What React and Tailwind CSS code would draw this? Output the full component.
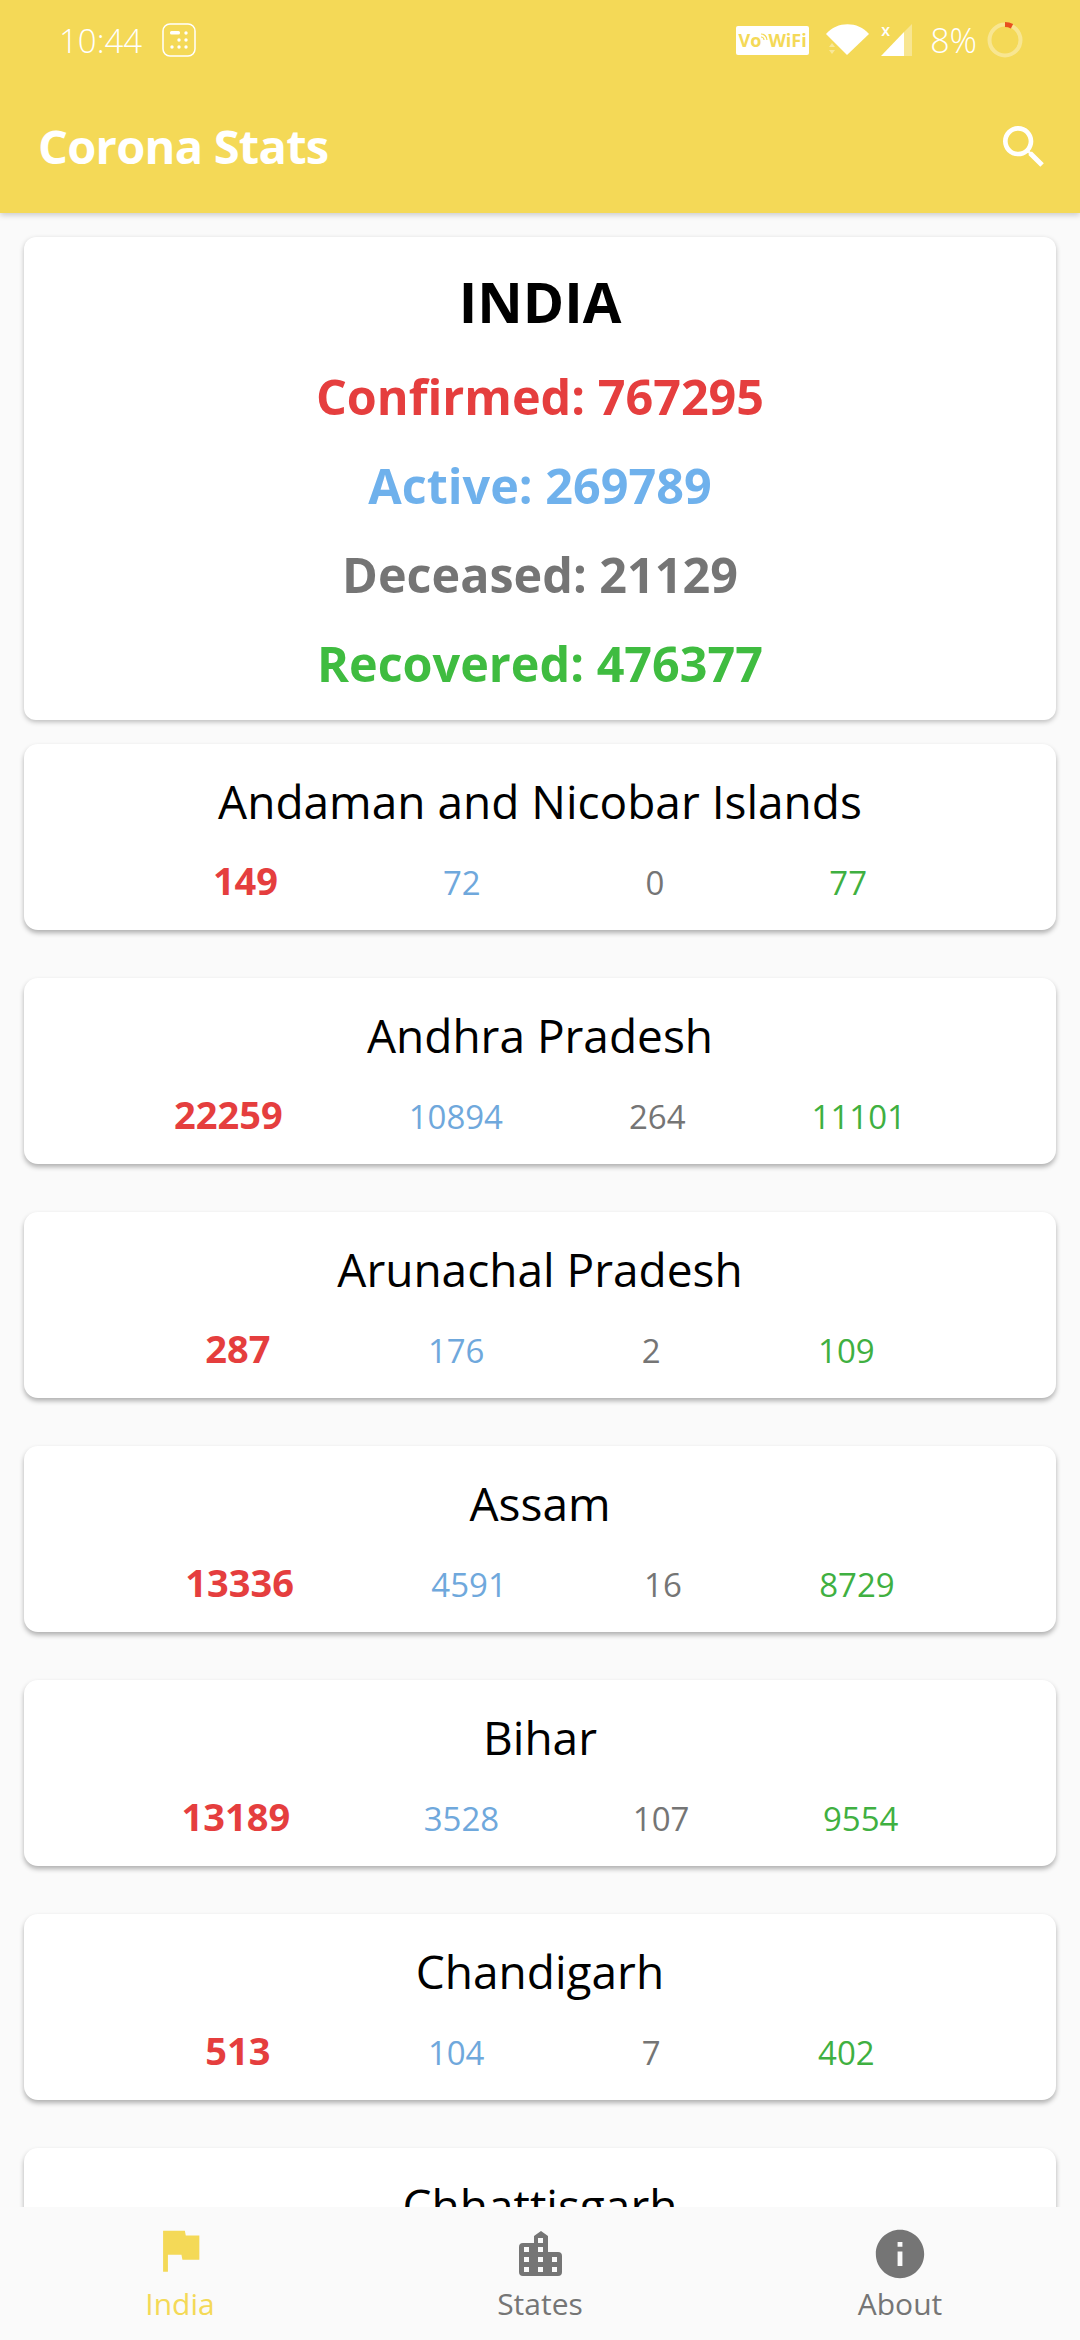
const states = [
  { name: 'Andaman and Nicobar Islands', confirmed: 149, active: 72, deceased: 0, recovered: 77 },
  { name: 'Andhra Pradesh', confirmed: 22259, active: 10894, deceased: 264, recovered: 11101 },
  { name: 'Arunachal Pradesh', confirmed: 287, active: 176, deceased: 2, recovered: 109 },
  { name: 'Assam', confirmed: 13336, active: 4591, deceased: 16, recovered: 8729 },
  { name: 'Bihar', confirmed: 13189, active: 3528, deceased: 107, recovered: 9554 },
  { name: 'Chandigarh', confirmed: 513, active: 104, deceased: 7, recovered: 402 },
  { name: 'Chhattisgarh' },
];

const StatusBar = () => (
  <div className="flex h-[80px] items-center justify-between pl-[59px] pr-[57px] text-white">
    <div className="flex items-center gap-[20px]">
      <span className="text-[33px] font-light leading-none">10:44</span>
      <svg width="34" height="34" viewBox="0 0 34 34" fill="none">
        <rect x="1" y="1" width="32" height="32" rx="7" stroke="white" strokeWidth="1.5" />
        <rect x="8" y="8" width="10" height="3.5" rx="1.5" fill="white" />
        <circle cx="24" cy="10" r="1.7" fill="white" />
        <circle cx="17" cy="17" r="1.7" fill="white" />
        <circle cx="24" cy="17" r="1.7" fill="white" />
        <circle cx="10" cy="24" r="1.7" fill="white" />
        <circle cx="17" cy="24" r="1.7" fill="white" />
        <circle cx="24" cy="24" r="1.7" fill="white" />
      </svg>
    </div>
    <div className="flex items-center">
      <div className="flex h-[29px] w-[73px] items-center justify-center rounded-[2px] bg-white text-[18px] font-bold leading-none text-[#f4d957]">
        <span>Vo</span>
        <svg className="mb-[6px]" width="7" height="8" viewBox="0 0 7 8" fill="none" stroke="#f4d957" strokeWidth="1.2">
          <path d="M0 1 A6 6 0 0 1 6 7" />
          <path d="M0 4 A3 3 0 0 1 3 7" />
        </svg>
        <span>WiFi</span>
      </div>
      <svg className="ml-[17px]" width="43" height="32" viewBox="0 0 43 32" fill="white">
        <path d="M0 10 C11 -3 32 -3 43 10 L21 31 Z" />
        <path d="M3 23 L6 19 L9 23 Z M3 26 L6 30 L9 26 Z" fillOpacity="0.4" />
      </svg>
      <div className="relative ml-[12px] h-[32px] w-[31px]">
        <svg width="31" height="32" viewBox="0 0 31 32">
          <path d="M31 0 V32 H23 V8 Z" fill="white" fillOpacity="0.35" />
          <path d="M23 8 V32 H0 Z" fill="white" />
        </svg>
        <span className="absolute left-0 top-[-4px] text-[16px] font-semibold leading-[20px]">x</span>
      </div>
      <span className="ml-[18px] text-[34px] font-light leading-none">8%</span>
      <svg className="ml-[10px]" width="36" height="36" viewBox="0 0 36 36" fill="none">
        <circle cx="18" cy="18" r="15.5" stroke="white" strokeOpacity="0.35" strokeWidth="4" />
        <path d="M18 2.5 A15.5 15.5 0 0 1 25 4.2" stroke="#e8501e" strokeWidth="5" />
      </svg>
    </div>
  </div>
);

const Header = () => (
  <div className="z-10 h-[213px] shrink-0 bg-[#f4d957] shadow-[0_2px_6px_rgba(0,0,0,0.2)]">
    <StatusBar />
    <div className="flex h-[133px] items-center justify-between pl-[38px] pr-[28px]">
      <h1 className="text-[47px] font-bold leading-none tracking-[-0.75px] text-white">Corona Stats</h1>
      <svg width="56" height="56" viewBox="0 0 24 24" fill="white">
        <path d="M15.5 14h-.79l-.28-.27C15.41 12.59 16 11.11 16 9.5 16 5.91 13.09 3 9.5 3S3 5.91 3 9.5 5.91 16 9.5 16c1.61 0 3.09-.59 4.23-1.57l.27.28v.79l5 4.99L20.49 19l-4.99-5zm-6 0C7.01 14 5 11.99 5 9.5S7.01 5 9.5 5 14 7.01 14 9.5 11.99 14 9.5 14z" />
      </svg>
    </div>
  </div>
);

const IndiaCard = () => (
  <div className="flex h-[483px] shrink-0 flex-col items-center rounded-[12px] bg-white pt-[26px] shadow-[0_2px_5px_rgba(0,0,0,0.25)]">
    <h2 className="text-[56px] font-bold leading-[76px] text-black">INDIA</h2>
    <p className="mt-[25px] text-[48.5px] font-bold leading-[64px] text-[#e53e3e]">Confirmed: 767295</p>
    <p className="mt-[25px] text-[48.5px] font-bold leading-[64px] text-[#6fb1ec]">Active: 269789</p>
    <p className="mt-[25px] text-[48.5px] font-bold leading-[64px] text-[#757575]">Deceased: 21129</p>
    <p className="mt-[25px] text-[48.5px] font-bold leading-[64px] text-[#3fbc40]">Recovered: 476377</p>
  </div>
);

const StateCard = ({ state }) => (
  <div className="h-[186px] shrink-0 rounded-[14px] bg-white shadow-[0_3px_5px_rgba(0,0,0,0.3)]">
    <h3 className="pt-[25px] text-center text-[46px] leading-[64px] text-black">{state.name}</h3>
    {state.confirmed && (
      <div className="mt-[24px] flex items-baseline justify-evenly px-[24px] text-[33px] leading-[46px]">
        <span className="text-[38px] font-bold text-[#e53e3e]">{state.confirmed}</span>
        <span className="text-[#6fa8dc]">{state.active}</span>
        <span className="text-[#757575]">{state.deceased}</span>
        <span className="text-[#3fb041]">{state.recovered}</span>
      </div>
    )}
  </div>
);

const NavItem = ({ label, color, children }) => (
  <div className="flex flex-1 flex-col items-center pt-[14px]" style={{ color }}>
    <div className="flex h-[58px] items-start">{children}</div>
    <span className="mt-[4px] text-[30px] leading-[42px]">{label}</span>
  </div>
);

const BottomNav = () => (
  <div className="z-10 flex h-[133px] shrink-0 bg-[#fafafa]">
    <NavItem label="India" color="#f4d957">
      <svg width="58" height="58" viewBox="0 0 24 24" fill="currentColor">
        <path d="M14.4 6L14 4H5v17h2v-7h5.6l.4 2h7V6z" />
      </svg>
    </NavItem>
    <NavItem label="States" color="#757575">
      <svg className="mt-[10px]" width="43" height="45" viewBox="0 0 43 45">
        <path fill="currentColor" d="M0 16q0-4 4-4h11V5l7-5 7 5v16h10q4 0 4 4v16q0 4-4 4H4q-4 0-4-4z" />
        <g fill="#fafafa">
          <rect x="19" y="7" width="5" height="5" />
          <rect x="5" y="16" width="5" height="5" />
          <rect x="19" y="16" width="5" height="5" />
          <rect x="5" y="26" width="5" height="5" />
          <rect x="19" y="26" width="5" height="5" />
          <rect x="33" y="26" width="5" height="5" />
          <rect x="5" y="36" width="5" height="5" />
          <rect x="19" y="36" width="5" height="5" />
          <rect x="33" y="36" width="5" height="5" />
        </g>
      </svg>
    </NavItem>
    <NavItem label="About" color="#757575">
      <svg className="mt-[4px]" width="58" height="58" viewBox="0 0 24 24" fill="currentColor">
        <path d="M12 2C6.48 2 2 6.48 2 12s4.48 10 10 10 10-4.48 10-10S17.52 2 12 2zm1 15h-2v-6h2v6zm0-8h-2V7h2v2z" />
      </svg>
    </NavItem>
  </div>
);

export default function App() {
  return (
    <div className="flex h-[2340px] w-[1080px] flex-col overflow-hidden bg-[#fafafa] font-['Open_Sans',sans-serif]">
      <Header />
      <div className="flex min-h-0 flex-1 flex-col gap-[48px] overflow-hidden px-[24px] pt-[24px]">
        <div className="-mb-[24px]">
          <IndiaCard />
        </div>
        {states.map((state) => (
          <StateCard key={state.name} state={state} />
        ))}
      </div>
      <BottomNav />
    </div>
  );
}
